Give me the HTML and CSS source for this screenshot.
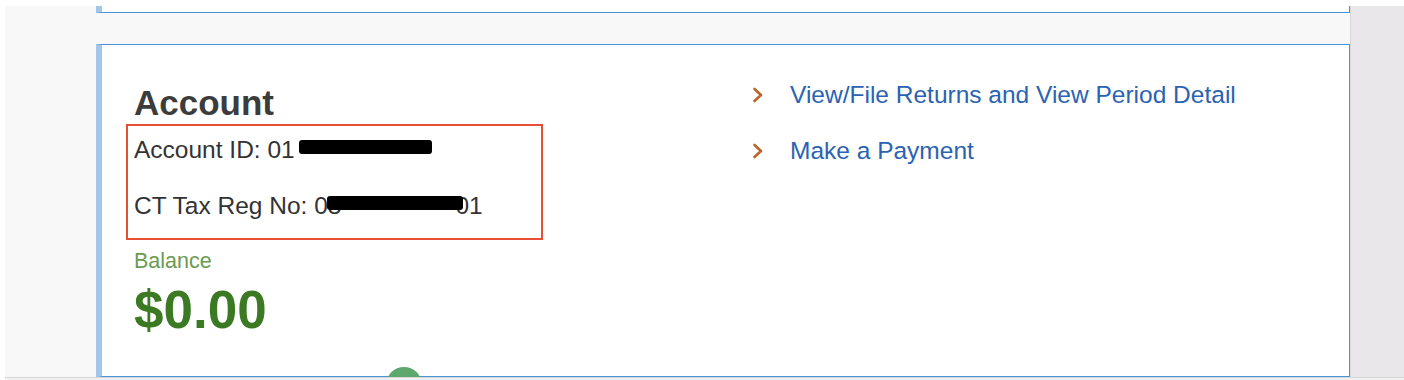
FILE: index.html
```html
<!DOCTYPE html>
<html lang="en">
  <head>
    <meta charset="UTF-8" />
    <meta name="viewport" content="width=device-width, initial-scale=1.0" />
    <title>Account</title>
    <link rel="stylesheet" href="styles.css">
  </head>
  <body>
    <div class="screen">
      <div class="main">
        <div class="panel-prev"></div>

        <div class="panel">
          <div class="col-left">
            <h2 class="title">Account</h2>
            <div class="ids">
              <div class="row">Account ID: 01<span class="redact redact-id"></span></div>
              <div class="row">CT Tax Reg No: 08<span class="redact redact-reg"></span>01</div>
            </div>
            <div class="balance-label">Balance</div>
            <div class="balance">$0.00</div>
          </div>

          <div class="col-right">
            <a class="link" href="#">
              <svg class="chev" width="12" height="16" viewBox="0 0 12 16">
                <polyline points="2.5,2 9,8 2.5,14" />
              </svg>
              <span>View/File Returns and View Period Detail</span>
            </a>
            <a class="link" href="#">
              <svg class="chev" width="12" height="16" viewBox="0 0 12 16">
                <polyline points="2.5,2 9,8 2.5,14" />
              </svg>
              <span>Make a Payment</span>
            </a>
          </div>

          <div class="fab"></div>
        </div>
      </div>
      <div class="side"></div>
    </div>
    <div class="bottom-line"></div>
  </body>
</html>
```

FILE: styles.css
```css
body {
  margin: 0;
  width: 1404px;
  height: 380px;
  overflow: hidden;
  background-color: #ffffff;
  font-family: "Liberation Sans", Arial, sans-serif;
}
.screen {
  display: flex;
  margin: 6px 0 0 5px;
  height: 371px;
}
.main {
  flex: 1;
  background-color: #f8f8f8;
  padding-left: 91px;
  overflow: hidden;
}
.side {
  width: 53px;
  background-color: #e9e7ea;
  border-left: 1px solid #d9d7da;
}
.bottom-line {
  height: 3px;
  margin-left: 5px;
  border-top: 1px solid #d6d6d6;
  background-color: #f1f1f1;
}
.panel-prev {
  height: 6px;
  background-color: #ffffff;
  border-left: 6px solid #a3c6ea;
  border-right: 1px solid #4a93dd;
  border-bottom: 1px solid #4a93dd;
}
.panel {
  position: relative;
  display: grid;
  grid-template-columns: 618px 1fr;
  margin-top: 31px;
  height: 311px;
  padding: 20px 0 0 32px;
  background-color: #ffffff;
  border-left: 6px solid #a3c6ea;
  border-top: 1px solid #4a93dd;
  border-right: 1px solid #4a93dd;
  border-bottom: 2px solid #4a93dd;
}
.col-left {
  padding-top: 19px;
}
.title {
  margin: 0;
  font-size: 35px;
  line-height: 38px;
  font-weight: bold;
  color: #3c3c3c;
}
.ids {
  position: relative;
}
.ids::after {
  content: "";
  position: absolute;
  top: 2px;
  left: -8px;
  width: 413px;
  height: 112px;
  border: 2px solid #e84d36;
}
.row {
  font-size: 24.5px;
  line-height: 56px;
  color: #333333;
}
.redact {
  position: relative;
  z-index: 1;
  display: inline-block;
  height: 14px;
  background-color: #000000;
  border-radius: 3px;
  vertical-align: 4px;
}
.redact-id {
  width: 133px;
  margin-left: 4px;
}
.redact-reg {
  width: 136px;
  margin-left: -14px;
  margin-right: -8px;
}
.balance-label {
  margin-top: 15px;
  font-size: 21.5px;
  line-height: 24px;
  color: #6b9b50;
}
.balance {
  margin-top: 9px;
  font-size: 53px;
  line-height: 56px;
  font-weight: bold;
  color: #3b7a22;
}
.col-right {
  display: flex;
  flex-direction: column;
  padding-top: 2px;
}
.link {
  display: flex;
  align-items: center;
  height: 56px;
  font-size: 24.5px;
  color: #2a63b2;
  text-decoration: none;
}
.chev {
  width: 12px;
  margin-right: 26px;
}
.chev polyline {
  fill: none;
  stroke: #c1622b;
  stroke-width: 2.6;
  stroke-linecap: round;
  stroke-linejoin: round;
}
.fab {
  position: absolute;
  left: 284px;
  bottom: -27px;
  width: 36px;
  height: 36px;
  border-radius: 50%;
  background-color: #5fa86d;
}
```
